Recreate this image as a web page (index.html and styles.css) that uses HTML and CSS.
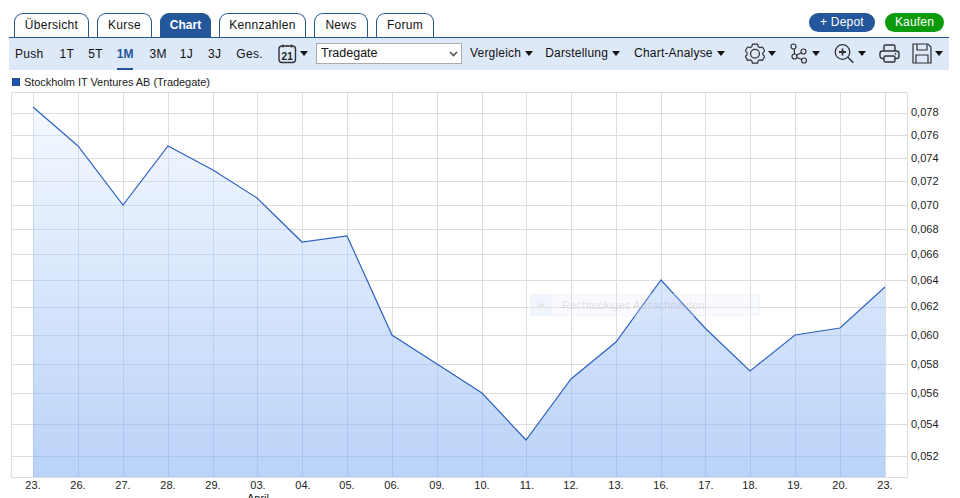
FILE: index.html
```html
<!DOCTYPE html>
<html lang="de">
<head>
<meta charset="utf-8">
<title>Chart</title>
<link rel="stylesheet" href="styles.css">
</head>
<body>
<div class="page">
  <header class="topbar">
    <nav class="tabs">
      <a class="tab tab-w75">Übersicht</a>
      <a class="tab tab-w55">Kurse</a>
      <a class="tab tab-active tab-w51">Chart</a>
      <a class="tab tab-w87">Kennzahlen</a>
      <a class="tab tab-w54">News</a>
      <a class="tab tab-w58">Forum</a>
    </nav>
    <div class="actions">
      <a class="pill pill-blue">+ Depot</a>
      <a class="pill pill-green">Kaufen</a>
    </div>
  </header>
  <div class="toolbar">
    <div class="ranges">
      <span class="range r-push">Push</span>
      <span class="range r-1t">1T</span>
      <span class="range r-5t">5T</span>
      <span class="range r-1m active">1M</span>
      <span class="range r-3m">3M</span>
      <span class="range r-1j">1J</span>
      <span class="range r-3j">3J</span>
      <span class="range r-ges">Ges.</span>
    </div>
    <div class="tool tool-cal">
      <svg class="ico" width="19" height="21" viewBox="0 0 19 21"><rect x="1" y="3" width="16.500" height="16.500" rx="3" fill="none" stroke="#333" stroke-width="1.400"/><path d="M5 1.500v3M13.500 1.500v3" stroke="#333" stroke-width="1.400"/><path d="M8 3h3" stroke="#333"/><text x="9.300" y="16.500" class="cal-num">21</text></svg>
      <i class="caret"></i>
    </div>
    <div class="select-wrap">
      <select class="exchange"><option>Tradegate</option></select>
      <svg class="chevron" width="9" height="6" viewBox="0 0 9 6"><path d="M1 1l3.500 3.500L8 1" fill="none" stroke="#555" stroke-width="1.600"/></svg>
    </div>
    <div class="menu m-vergleich">Vergleich<i class="caret"></i></div>
    <div class="menu m-darst">Darstellung<i class="caret"></i></div>
    <div class="menu m-analyse">Chart-Analyse<i class="caret"></i></div>
    <div class="tool tool-gear">
      <svg class="ico" width="20" height="21" viewBox="0 0 20 21"><path d="M7.500 1.200h5l.8 2.500 1.500.9 2.600-.6 2.300 3.800-1.800 2v1.800l1.800 2-2.300 3.800-2.600-.6-1.500.9-.8 2.500h-5l-.8-2.500-1.500-.9-2.600.6-2.300-3.800 1.800-2V9.800l-1.800-2 2.300-3.800 2.600.6 1.500-.9z" fill="none" stroke="#333" stroke-width="1.200" stroke-linejoin="round"/><circle cx="10" cy="10.700" r="4.400" fill="none" stroke="#333" stroke-width="1.300"/></svg>
      <i class="caret"></i>
    </div>
    <div class="tool tool-nodes">
      <svg class="ico" width="18" height="21" viewBox="0 0 18 21"><g fill="none" stroke="#333" stroke-width="1.200"><circle cx="3.500" cy="3.500" r="2.500"/><circle cx="13.500" cy="8.500" r="2.500"/><circle cx="4.500" cy="13.500" r="2.500"/><circle cx="14" cy="17.500" r="2.500"/><path d="M4.300 5.900L4.500 11M11.300 9.700L6.700 12.300M6.900 14.500L11.700 16.500"/></g></svg>
      <i class="caret"></i>
    </div>
    <div class="tool tool-zoom">
      <svg class="ico" width="21" height="21" viewBox="0 0 21 21"><circle cx="8.500" cy="9" r="7.300" fill="none" stroke="#333" stroke-width="1.300"/><path d="M5 9h7M8.500 5.500v7" stroke="#333" stroke-width="1.800"/><path d="M13.800 14.300l5.500 5.500" stroke="#333" stroke-width="1.600"/></svg>
      <i class="caret"></i>
    </div>
    <div class="tool tool-print">
      <svg class="ico" width="21" height="21" viewBox="0 0 21 21"><g fill="none" stroke="#333" stroke-width="1.400"><path d="M5 8V3.500a1.500 1.500 0 0 1 1.500-1.500h8A1.500 1.500 0 0 1 16 3.500V8"/><path d="M5 15.500H3.500A2.500 2.500 0 0 1 1 13v-2.500A2.500 2.500 0 0 1 3.500 8h14a2.500 2.500 0 0 1 2.500 2.500V13a2.500 2.500 0 0 1-2.500 2.500H16"/><rect x="5" y="13" width="11" height="6" rx="1.500"/></g><circle cx="16.500" cy="10.800" r=".9" fill="#333"/></svg>
    </div>
    <div class="tool tool-save">
      <svg class="ico" width="20" height="21" viewBox="0 0 20 21"><g fill="none" stroke="#333" stroke-width="1.200"><path d="M1 1h15l3 3v16H1z"/><path d="M5 1v6h10V1M4 20v-8h12v8"/></g></svg>
      <i class="caret"></i>
    </div>
  </div>
  <div class="legend"><i class="legend-box"></i>Stockholm IT Ventures AB (Tradegate)</div>
  <div class="chart">
    <svg class="plot" width="960" height="406" viewBox="0 92 960 406">
      <defs>
        <linearGradient id="area" gradientUnits="userSpaceOnUse" x1="0" y1="107" x2="0" y2="477">
          <stop offset="0" stop-color="#f5f9ff"/>
          <stop offset="1" stop-color="#bad2f8"/>
        </linearGradient>
        <clipPath id="under"><path d="M33 107L78 146L123 205L168 146L213 170L257 198L302 242L347 236L392 335L437 364L482 393L526 440L571 379L616 342L661 280L705 328L750 371L795 335L840 328L885 287V477H33Z"/></clipPath>
        <path id="gridlines" d="M11.500 92.500H907.500V477.500H11.500ZM33.500 92V477M78.500 92V477M123.500 92V477M168.500 92V477M213.500 92V477M257.500 92V477M302.500 92V477M347.500 92V477M392.500 92V477M437.500 92V477M482.500 92V477M526.500 92V477M571.500 92V477M616.500 92V477M661.500 92V477M705.500 92V477M750.500 92V477M795.500 92V477M840.500 92V477M885.500 92V477M11 113.500H907M11 135.500H907M11 158.500H907M11 181.500H907M11 205.500H907M11 229.500H907M11 254.500H907M11 280.500H907M11 307.500H907M11 335.500H907M11 364.500H907M11 393.500H907M11 424.500H907M11 456.500H907"/>
      </defs>
      <use href="#gridlines" class="grid"/>
      <path fill="url(#area)" d="M33 107L78 146L123 205L168 146L213 170L257 198L302 242L347 236L392 335L437 364L482 393L526 440L571 379L616 342L661 280L705 328L750 371L795 335L840 328L885 287V477H33Z"/>
      <g clip-path="url(#under)"><use href="#gridlines" class="grid-over"/></g>
      <path class="line" d="M33 107L78 146L123 205L168 146L213 170L257 198L302 242L347 236L392 335L437 364L482 393L526 440L571 379L616 342L661 280L705 328L750 371L795 335L840 328L885 287"/>
      <g class="ylab">
        <text x="911" y="116">0,078</text><text x="911" y="139">0,076</text><text x="911" y="162">0,074</text><text x="911" y="185">0,072</text><text x="911" y="209">0,070</text><text x="911" y="233">0,068</text><text x="911" y="258">0,066</text><text x="911" y="284">0,064</text><text x="911" y="310">0,062</text><text x="911" y="339">0,060</text><text x="911" y="368">0,058</text><text x="911" y="397">0,056</text><text x="911" y="428">0,054</text><text x="911" y="460">0,052</text>
      </g>
      <g class="xlab">
        <text x="33" y="489">23.</text><text x="78" y="489">26.</text><text x="123" y="489">27.</text><text x="168" y="489">28.</text><text x="213" y="489">29.</text><text x="258" y="489">03.</text><text x="258" y="502">April</text><text x="303" y="489">04.</text><text x="347" y="489">05.</text><text x="392" y="489">06.</text><text x="437" y="489">09.</text><text x="482" y="489">10.</text><text x="527" y="489">11.</text><text x="571" y="489">12.</text><text x="616" y="489">13.</text><text x="661" y="489">16.</text><text x="706" y="489">17.</text><text x="750" y="489">18.</text><text x="795" y="489">19.</text><text x="840" y="489">20.</text><text x="885" y="489">23.</text>
      </g>
    </svg>
    <div class="ghost"><span class="ghost-icon"><i></i></span><span class="ghost-text">Rechteckiges Ausschneiden</span></div>
  </div>
</div>
</body>
</html>
```
FILE: styles.css
```css
html, body { margin: 0; padding: 0; background: #fff; }
body { font-family: "Liberation Sans", Arial, sans-serif; font-size: 12px; color: #111; overflow: hidden; }
.page { width: 960px; height: 498px; overflow: hidden; }

.topbar { display: flex; justify-content: space-between; align-items: flex-start; height: 24px; padding: 13px 16px 0 14px; }
.tabs { display: flex; gap: 8px; }
.tab { box-sizing: border-box; height: 24px; line-height: 23px; text-align: center; background: #fff; color: #111; border: 1px solid #23568f; border-bottom: 0; border-radius: 9px 9px 0 0; letter-spacing: .3px; }
.tab-w75 { width: 75px; }
.tab-w55 { width: 55px; }
.tab-w51 { width: 51px; }
.tab-w87 { width: 87px; }
.tab-w54 { width: 54px; }
.tab-w58 { width: 58px; }
.tab-active { background: #23569b; color: #fff; font-weight: bold; letter-spacing: 0; }
.actions { display: flex; gap: 10px; }
.pill { height: 19px; line-height: 18px; text-align: center; color: #fff; border-radius: 10px; letter-spacing: .2px; }
.pill-blue { width: 66px; background: #23569b; }
.pill-green { width: 59px; background: #0a9a0a; }

.toolbar { display: flex; align-items: center; height: 32px; margin: 0 11px 0 9px; background: #dde8f8; border-top: 1px solid #23568f; }
.ranges { display: flex; padding-left: 6px; width: 263px; flex: none; box-sizing: content-box; }
.range { letter-spacing: .3px; }
.r-push { margin-right: 16px; }
.r-1t { margin-right: 14px; }
.r-5t { margin-right: 14px; }
.r-1m { margin-right: 16px; }
.r-3m { margin-right: 13px; }
.r-1j { margin-right: 15px; }
.r-3j { margin-right: 15px; }
.active { position: relative; font-weight: bold; color: #23569b; letter-spacing: 0; }
.active::after { content: ""; position: absolute; left: 0; right: 0; top: 21px; height: 2px; background: #23569b; }

.tool, .menu { display: flex; align-items: center; flex: none; margin-bottom: 2px; }
.menu { letter-spacing: .2px; color: #111; }
.menu .caret { margin-left: 4px; }
.ico { display: block; }
.cal-num { font: bold 10px "Liberation Sans", Arial, sans-serif; fill: #222; text-anchor: middle; letter-spacing: .3px; }
.caret { display: block; width: 0; height: 0; margin-left: 3px; border-left: 4.5px solid transparent; border-right: 4.5px solid transparent; border-top: 5px solid #111; }
.select-wrap { position: relative; flex: none; width: 146px; height: 21px; margin: 0 0 2px 8px; }
.exchange { display: block; box-sizing: border-box; width: 100%; height: 100%; padding: 0 0 0 4px; font: 12.5px "Liberation Sans", Arial, sans-serif; color: #111; background: #fff; border: 1px solid #aaa; border-radius: 0; appearance: none; }
.chevron { position: absolute; right: 4px; top: 8px; display: block; }
.m-vergleich { margin-left: 8px; }
.m-darst { margin-left: 12px; }
.m-analyse { margin-left: 14px; }
.tool-gear { margin-left: 20px; }
.tool-nodes { margin-left: 14px; }
.tool-nodes .caret { margin-left: 4px; }
.tool-zoom { margin-left: 14px; }
.tool-print { margin-left: 13px; }
.tool-save { margin-left: 12px; }

.legend { box-sizing: border-box; display: flex; align-items: center; height: 22px; padding: 1px 0 0 12px; font-size: 11px; color: #222; letter-spacing: -.05px; }
.legend-box { display: block; box-sizing: border-box; width: 8px; height: 8px; margin-right: 4px; background: #1a56b8; border: 1px solid #2b4a80; }

.chart { position: relative; height: 406px; }
.plot { display: block; }
.grid { fill: none; stroke: #ddd; stroke-width: 1; }
.grid-over { fill: none; stroke: rgba(90, 130, 200, .18); stroke-width: 1; }
.line { fill: none; stroke: #2f62c0; stroke-width: 1.2; stroke-linejoin: miter; }
.ylab text, .xlab text { font: 11px "Liberation Sans", Arial, sans-serif; fill: #222; }
.xlab text { text-anchor: middle; }

.ghost { position: absolute; left: 530px; top: 202px; width: 230px; height: 22px; display: flex; align-items: center; background: rgba(221, 232, 248, .22); border: 1px solid rgba(221, 232, 248, .3); box-sizing: border-box; font-size: 11px; }
.ghost-icon { display: flex; align-items: center; justify-content: center; width: 21px; height: 100%; background: rgba(221, 232, 248, .3); }
.ghost-icon i { display: block; width: 5px; height: 5px; border-radius: 50%; background: #e6e6e6; }
.ghost-text { margin-left: 10px; color: rgba(180, 150, 150, .28); letter-spacing: .2px; }
```
